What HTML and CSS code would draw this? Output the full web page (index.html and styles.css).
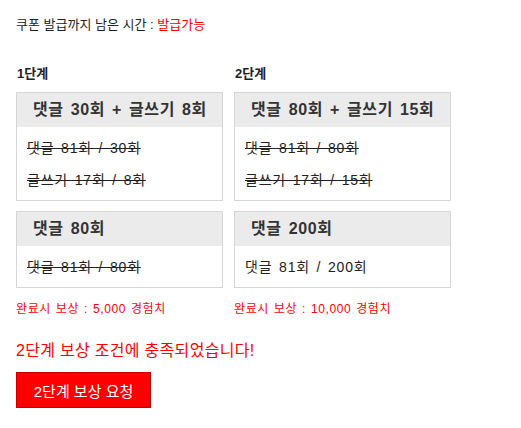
FILE: index.html
```html
<!DOCTYPE html>
<html lang="ko">
<head>
<meta charset="utf-8">
<link rel="stylesheet" href="styles.css">
</head>
<body>
<div class="page">
  <p class="timer">쿠폰 발급까지 남은 시간 : <span class="red">발급가능</span></p>
  <div class="stages">
    <div class="col col1">
      <h3 class="stage">1단계</h3>
      <div class="box">
        <div class="head">댓글 30회 + 글쓰기 8회</div>
        <div class="body">
          <div class="line done">댓글 81회 / 30회</div>
          <div class="line done">글쓰기 17회 / 8회</div>
        </div>
      </div>
      <div class="box">
        <div class="head">댓글 80회</div>
        <div class="body">
          <div class="line done">댓글 81회 / 80회</div>
        </div>
      </div>
      <p class="reward">완료시 보상 : 5,000 경험치</p>
    </div>
    <div class="col col2">
      <h3 class="stage">2단계</h3>
      <div class="box">
        <div class="head">댓글 80회 + 글쓰기 15회</div>
        <div class="body">
          <div class="line done">댓글 81회 / 80회</div>
          <div class="line done">글쓰기 17회 / 15회</div>
        </div>
      </div>
      <div class="box">
        <div class="head">댓글 200회</div>
        <div class="body">
          <div class="line">댓글 81회 / 200회</div>
        </div>
      </div>
      <p class="reward">완료시 보상 : 10,000 경험치</p>
    </div>
  </div>
  <p class="msg">2단계 보상 조건에 충족되었습니다!</p>
  <button class="btn">2단계 보상 요청</button>
</div>
</body>
</html>
```
FILE: styles.css
```css
html, body {
  margin: 0;
  padding: 0;
  background: #fff;
}
body {
  font-family: "Liberation Sans", "Noto Sans CJK KR", sans-serif;
  color: #222;
}
.page {
  padding: 16px 16px 0 16px;
}
.timer {
  margin: 0;
  font-size: 13px;
  line-height: 18px;
  color: #222;
}
.red {
  color: #ff0000;
}
.stages {
  display: flex;
  gap: 11px;
  margin-top: 32px;
}
.col1 { width: 207px; }
.col2 { width: 217px; }
.stage {
  margin: 0 0 10px 1px;
  font-size: 13px;
  font-weight: bold;
  line-height: 16px;
  color: #222;
}
.box {
  border: 1px solid #d6d6d6;
  margin-bottom: 10px;
}
.head {
  background: #ebebeb;
  height: 34px;
  line-height: 34px;
  padding-left: 16px;
  font-size: 16px;
  font-weight: bold;
  letter-spacing: 0.6px;
  word-spacing: 2px;
  color: #333;
  white-space: nowrap;
}
.body {
  padding: 5px 10px 4px 10px;
}
.line {
  font-size: 14px;
  line-height: 32px;
  letter-spacing: 0.8px;
  word-spacing: 2px;
  color: #222;
  white-space: nowrap;
}
.line.done {
  text-decoration: line-through;
}
.reward {
  margin: 0;
  font-size: 12px;
  letter-spacing: 0.6px;
  word-spacing: 1px;
  line-height: 22px;
  color: #ff0000;
  white-space: nowrap;
}
.msg {
  margin: 21px 0 0 0;
  font-size: 16px;
  letter-spacing: 0.3px;
  line-height: 20px;
  color: #ff0000;
}
.btn {
  display: block;
  margin-top: 11px;
  width: 135px;
  height: 36px;
  background: #ff0000;
  border: 1px solid #c40000;
  color: #fff;
  font-family: "Liberation Sans", "Noto Sans CJK KR", sans-serif;
  font-size: 15px;
  padding: 0;
}
```
